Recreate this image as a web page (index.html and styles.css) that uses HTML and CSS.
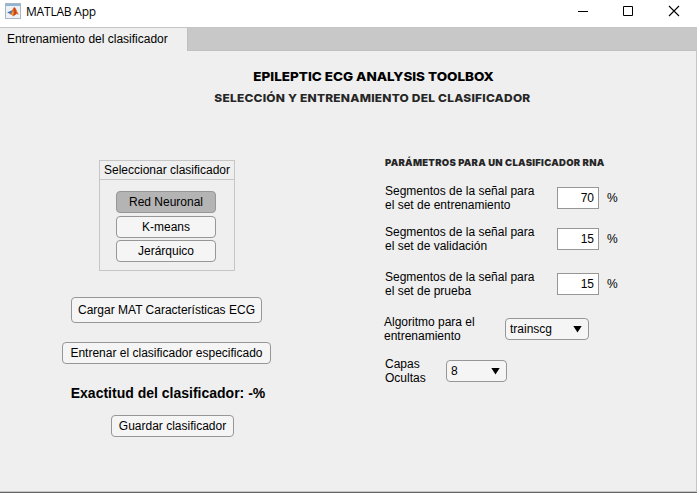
FILE: index.html
```html
<!DOCTYPE html>
<html lang="es">
<head>
<meta charset="utf-8">
<title>MATLAB App</title>
<link rel="stylesheet" href="styles.css">
</head>
<body>
<div class="window">
  <header class="titlebar">
    <svg class="logo" width="16" height="16" viewBox="0 0 16 16">
      <rect x=".5" y=".5" width="15" height="15" fill="#eef2f6" stroke="#a9b7c5"/>
      <path d="M1 1h14v2H1z" fill="#8fb5d5"/>
      <path d="M2 9.5l3.5-1.5 2-1 1.5 1-2.5 3.5-1.5-.7z" fill="#3976b5"/>
      <path d="M5 11.2C7 9.5 7.5 4.5 9.3 4.2c1.700 0 2.700 5 4.700 7.600-1.800-1.300-2.700-1-3.500-.2L8 13.500c-.6-1.500-1.500-2.300-3-2.300z" fill="#e0641f"/>
      <path d="M9.300 4.200c1.200 1 1.600 5 1.200 7.400L9 12.800c.9-3 .6-5.600.3-8.600z" fill="#a8321f"/>
      <path d="M6.500 10.500l1.800-3 .2 3.500-.8 1.200z" fill="#f2a33c"/>
    </svg>
    <span class="app-name">MATLAB App</span>
    <svg class="controls" width="100" height="12" viewBox="0 0 100 12" fill="none" stroke="#000">
      <path d="M0 5.500h10M45.500.500h9v9h-9z"/>
      <path d="M91 0l10 10M101 0L91 10" stroke-width="1.100"/>
    </svg>
  </header>
  <nav class="tabs"><div class="tab"><span>Entrenamiento del clasificador</span></div></nav>
  <main class="panel">
    <h1><span>EPILEPTIC ECG ANALYSIS TOOLBOX</span></h1>
    <h2><span>SELECCIÓN Y ENTRENAMIENTO DEL CLASIFICADOR</span></h2>
    <div class="columns">
      <section class="actions">
        <div class="group">
          <div class="group-title">Seleccionar clasificador</div>
          <div class="group-body">
            <button class="btn option selected">Red Neuronal</button>
            <button class="btn option">K-means</button>
            <button class="btn option">Jerárquico</button>
          </div>
        </div>
        <button class="btn load">Cargar MAT Características ECG</button>
        <button class="btn train">Entrenar el clasificador especificado</button>
        <div class="accuracy">Exactitud del clasificador: -%</div>
        <button class="btn save">Guardar clasificador</button>
      </section>
      <section class="params">
        <h3>PARÁMETROS PARA UN CLASIFICADOR RNA</h3>
        <div class="row"><span class="label">Segmentos de la señal para<br>el set de entrenamiento</span><span class="field">70</span><span class="unit">%</span></div>
        <div class="row validation"><span class="label">Segmentos de la señal para<br>el set de validación</span><span class="field">15</span><span class="unit">%</span></div>
        <div class="row test"><span class="label">Segmentos de la señal para<br>el set de prueba</span><span class="field">15</span><span class="unit">%</span></div>
        <div class="row algorithm"><span class="label">Algoritmo para el<br>entrenamiento</span><span class="select"><span>trainscg</span><i class="arrow"></i></span></div>
        <div class="row layers"><span class="label">Capas<br>Ocultas</span><span class="select"><span>8</span><i class="arrow"></i></span></div>
      </section>
    </div>
  </main>
</div>
</body>
</html>
```
FILE: styles.css
```css
* { box-sizing: border-box; }
body { margin: 0; font: 12px/14px "Liberation Sans", Arial, sans-serif; color: #000; }
.window { width: 697px; height: 493px; display: flex; flex-direction: column; background: #efefef; border-bottom: 1px solid #666; overflow: hidden; }
.titlebar { height: 27px; flex: none; display: flex; align-items: flex-start; background: #fff; }
.logo { margin: 3px 0 0 5px; }
.app-name { margin: 4px 0 0 5px; font: 12px/16px "Open Sans", "Noto Sans", sans-serif; letter-spacing: -.2px; }
.controls { margin: 6px 19px 0 auto; overflow: visible; }
.tabs { height: 24px; flex: none; background: #c8c8c8; border-top: 1px solid #c5c5c5; border-bottom: 1px solid #c0c0c0; }
.tab { width: 188px; height: 23px; padding: 4px 0 0 7px; background: #efefef; border-right: 1px solid #c0c0c0; white-space: nowrap; }
.panel { flex: 1; border-right: 1px solid #c6c6c6; border-bottom: 1px solid #c6c6c6; }
h1, h2, h3 { margin: 0; font-family: Inter, "Liberation Sans", sans-serif; font-weight: 800; text-align: center; white-space: nowrap; }
h1 { padding: 18px 0 0 51px; font-size: 12.4px; line-height: 16px; }
h2 { padding: 6px 0 0 48px; font-size: 11px; line-height: 14px; letter-spacing: .2px; color: #262626; }
h1 span, h2 span { display: inline-block; transform: scaleX(1.087); }
.columns { display: grid; grid-template-columns: 333px 1fr; }
.actions { display: flex; flex-direction: column; align-items: center; padding-top: 55px; }
.btn { height: 22px; padding: 0; border: 1px solid #979797; border-radius: 4px; background: #f5f5f5; font: inherit; white-space: nowrap; color: #000; }
.group { width: 136px; height: 111px; border: 1px solid #c6c6c6; margin-left: 1px; }
.group-title { height: 19px; padding-top: 2px; border-bottom: 1px solid #c6c6c6; text-align: center; }
.group-body { display: flex; flex-direction: column; align-items: center; padding: 11px 2px 0 0; }
.option { width: 100px; margin-bottom: 3px; }
.option:nth-child(2) { margin-bottom: 2px; }
.selected { background: #b4b4b4; }
.load { width: 191px; height: 26px; margin-top: 26px; }
.train { width: 209px; margin-top: 19px; }
.accuracy { margin: 21px 0 0 3px; font-size: 14px; line-height: 16px; font-weight: 700; }
.save { width: 123px; margin: 14px 0 0 12px; }
.params { padding: 51px 0 0 52px; }
h3 { font-size: 9.500px; line-height: 14px; font-weight: 900; letter-spacing: .27px; color: #262626; text-align: left; }
.row { display: flex; align-items: center; height: 28px; margin-top: 14px; }
.label { width: 172px; white-space: nowrap; }
.field { width: 42px; height: 22px; padding: 3px 4px 0 0; border: 1px solid #979797; background: #fff; text-align: right; }
.unit { margin-left: 8px; }
.validation { margin-top: 13px; }
.test { margin-top: 17px; }
.algorithm { margin: 17px 0 0 -1px; }
.algorithm .label { width: 121px; }
.algorithm .select { width: 84px; }
.layers .label { width: 61px; }
.layers .select { width: 61px; }
.select { display: flex; align-items: center; justify-content: space-between; height: 22px; padding: 0 7px 1px 4px; border: 1px solid #979797; border-radius: 4px; background: #f5f5f5; }
.arrow { width: 9px; height: 7px; margin: 1px -1px 0 0; background: #000; clip-path: polygon(0 0, 100% 0, 50% 100%); }
```
